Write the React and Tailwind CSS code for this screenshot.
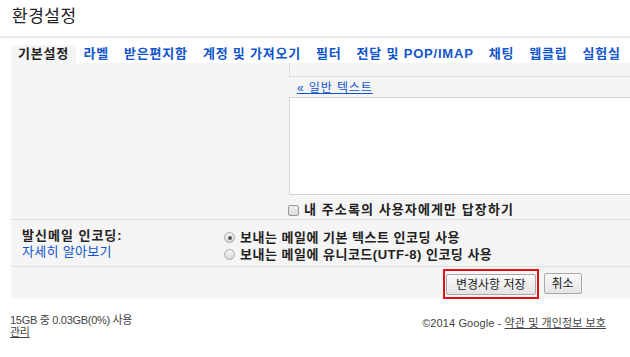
import React from 'react'

const tabs = ['라벨', '받은편지함', '계정 및 가져오기', '필터', '전달 및 POP/IMAP', '채팅', '웹클립', '실험실']

const font = { fontFamily: '"Liberation Sans", "Noto Sans CJK KR", sans-serif' }

export default function App() {
  return (
    <div className="w-[630px] h-[357px] bg-white overflow-hidden text-[#222]" style={font}>
      {/* title */}
      <div className="h-[36px] pl-[12px] pt-[6px] text-[17px] tracking-[0.5px] leading-[22px] text-[#222]">환경설정</div>
      <div className="h-[2px] bg-[#ebebeb]" />

      {/* tabs */}
      <div className="mt-[7px] ml-[11px] flex h-[18px] items-center text-[13px] font-bold leading-[18px] tracking-[0.8px]">
        <div className="bg-[#f5f5f5] px-[7px] h-[18px]">기본설정</div>
        {tabs.map(t => (
          <a key={t} href="#" className="px-[7.5px] text-[#15c] whitespace-nowrap">{t}</a>
        ))}
      </div>

      {/* panel */}
      <div className="ml-[11px] h-[236px] bg-[#f5f5f5] flex flex-col">
        <div className="flex flex-col pl-[278px] h-[158px]">
          <div className="h-[14px] border-l border-b border-[#dcdcdc]" />
          <a href="#" className="mt-[4px] ml-[8px] text-[12px] leading-[14px] text-[#15c] underline tracking-[0.9px]">« 일반 텍스트</a>
          <div className="mt-[2px] h-[98px] bg-white border border-[#d4d4d4] border-r-0" />
          <label className="mt-[7px] flex items-center gap-[5px] -ml-[1px] text-[13px] font-bold leading-[16px]">
            <span className="w-[11px] h-[11px] border border-[#999] rounded-[2px] bg-gradient-to-b from-[#eee] to-[#ddd]" />
            <span className="tracking-[1.1px]">내 주소록의 사용자에게만 답장하기</span>
          </label>
        </div>
        <div className="h-px bg-[#e0e0e0]" />
        <div className="h-[46px] flex pt-[9px]">
          <div className="w-[213px] pl-[11px] text-[13px] leading-[13px]">
            <div className="font-bold tracking-[1px]">발신메일 인코딩:</div>
            <a href="#" className="block mt-[3px] text-[#15c] tracking-[0.3px]">자세히 알아보기</a>
          </div>
          <div className="flex flex-col gap-[4px] pt-[2px] text-[13px] font-bold leading-[13px]">
            {['보내는 메일에 기본 텍스트 인코딩 사용', '보내는 메일에 유니코드(UTF-8) 인코딩 사용'].map((t, i) => (
              <div key={t} className="flex items-center gap-[5px]">
                <span className="w-[11px] h-[11px] rounded-full border border-[#aaa] bg-gradient-to-b from-[#f4f4f4] to-[#d8d8d8] flex items-center justify-center">
                  {i === 0 && <span className="w-[4px] h-[4px] rounded-full bg-[#555]" />}
                </span>
                <span className="tracking-[0.5px]">{t}</span>
              </div>
            ))}
          </div>
        </div>
        <div className="h-px bg-[#e0e0e0]" />
        <div className="flex items-center pl-[432px] pt-[2px] gap-[5px]">
          <div className="border-2 border-[#e0101a] p-[1px]">
            <button className="h-[21px] px-[9px] text-[12px] border border-[#a8a8a8] rounded-[2px] bg-gradient-to-b from-[#fafafa] to-[#e4e4e4] text-[#222]">변경사항 저장</button>
          </div>
          <button className="h-[21px] px-[7px] text-[12px] border border-[#a8a8a8] rounded-[2px] bg-gradient-to-b from-[#fafafa] to-[#e4e4e4] text-[#222]">취소</button>
        </div>
      </div>

      {/* footer */}
      <div className="flex justify-between pl-[10px] pr-[24px] pt-[15px] text-[11px] leading-[12px] text-[#444]">
        <div className="tracking-[-0.3px]">
          <div>15GB 중 0.03GB(0%) 사용</div>
          <a href="#" className="underline">관리</a>
        </div>
        <div className="pt-[3px] tracking-[0.1px]">
          ©2014 Google - <a href="#" className="underline">약관 및 개인정보 보호</a>
        </div>
      </div>
    </div>
  )
}
